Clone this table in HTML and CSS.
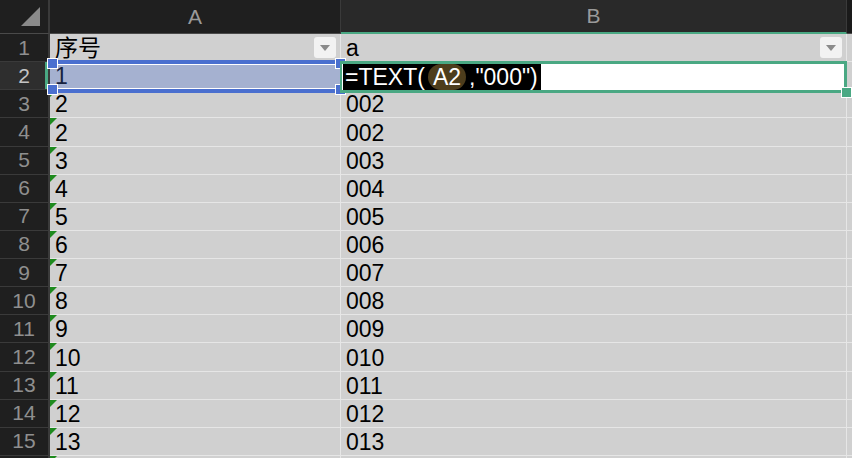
FILE: index.html
```html
<!DOCTYPE html>
<html lang="zh">
<head>
  <meta charset="UTF-8">
  <title>Sheet</title>
  <link rel="stylesheet" href="styles.css">
</head>
<body>
  <div class="sheet">
    <div class="grid">
      <!-- column headers -->
      <div class="corner">
        <svg width="20" height="20" viewBox="0 0 20 20"><polygon points="19,0 19,19 0,19" fill="#8a8a8a"/></svg>
      </div>
      <div class="colhead">A</div>
      <div class="colhead active">B</div>
      <div class="colhead stub"></div>

      <!-- row 1 -->
      <div class="rowhead">1</div>
      <div class="cell">序号<span class="filter"></span></div>
      <div class="cell">a<span class="filter"></span></div>
      <div class="cell stub"></div>

      <!-- row 2 -->
      <div class="rowhead active">2</div>
      <div class="cell picked">1</div>
      <div class="cell"></div>
      <div class="cell stub"></div>

      <div class="rowhead">3</div><div class="cell flag">2</div><div class="cell">002</div><div class="cell stub"></div>
      <div class="rowhead">4</div><div class="cell flag">2</div><div class="cell">002</div><div class="cell stub"></div>
      <div class="rowhead">5</div><div class="cell flag">3</div><div class="cell">003</div><div class="cell stub"></div>
      <div class="rowhead">6</div><div class="cell flag">4</div><div class="cell">004</div><div class="cell stub"></div>
      <div class="rowhead">7</div><div class="cell flag">5</div><div class="cell">005</div><div class="cell stub"></div>
      <div class="rowhead">8</div><div class="cell flag">6</div><div class="cell">006</div><div class="cell stub"></div>
      <div class="rowhead">9</div><div class="cell flag">7</div><div class="cell">007</div><div class="cell stub"></div>
      <div class="rowhead">10</div><div class="cell flag">8</div><div class="cell">008</div><div class="cell stub"></div>
      <div class="rowhead">11</div><div class="cell flag">9</div><div class="cell">009</div><div class="cell stub"></div>
      <div class="rowhead">12</div><div class="cell flag">10</div><div class="cell">010</div><div class="cell stub"></div>
      <div class="rowhead">13</div><div class="cell flag">11</div><div class="cell">011</div><div class="cell stub"></div>
      <div class="rowhead">14</div><div class="cell flag">12</div><div class="cell">012</div><div class="cell stub"></div>
      <div class="rowhead">15</div><div class="cell flag">13</div><div class="cell">013</div><div class="cell stub"></div>
      <div class="rowhead"></div><div class="cell flag"></div><div class="cell"></div><div class="cell stub"></div>
    </div>

    <!-- selection of A2 -->
    <div class="select-a">
      <span class="handle tl"></span>
      <span class="handle tr"></span>
      <span class="handle bl"></span>
      <span class="handle br"></span>
    </div>

    <!-- formula being edited in B2 -->
    <div class="editor">
      <span class="formula">=TEXT(<span class="ref">A2</span>,"000")</span><span class="caret"></span>
      <span class="fill-handle"></span>
    </div>
  </div>
</body>
</html>
```

FILE: styles.css
```css
body {
  margin: 0;
  background-color: #1f1f1f;
  font-family: "Liberation Sans", Arial, "Noto Sans CJK SC", sans-serif;
  overflow: hidden;
}
.sheet {
  position: relative;
  width: 852px;
  height: 458px;
  overflow: hidden;
}
.grid {
  display: grid;
  grid-template-columns: 50px 291px 506px 20px;
  grid-template-rows: 34px repeat(16, 28.14px);
}
.corner {
  background-color: #1f1f1f;
  border-right: 2px solid #3a3a3a;
  border-bottom: 1px solid #4a4a4a;
  display: flex;
  align-items: flex-start;
  justify-content: flex-end;
  padding: 7px 7px 0 0;
}
.colhead {
  background-color: #1f1f1f;
  color: #9a9a9a;
  font-size: 21px;
  display: flex;
  align-items: center;
  justify-content: center;
  border-right: 1px solid #3a3a3a;
  border-bottom: 1px solid #4a4a4a;
}
.colhead.active {
  background-color: #292929;
  border-bottom: 2px solid #4aa883;
}
.colhead.stub {
  background-color: #1a1a1a;
}
.rowhead {
  background-color: #1f1f1f;
  color: #8f8f8f;
  font-size: 21px;
  display: flex;
  align-items: center;
  justify-content: center;
  border-right: 2px solid #3a3a3a;
  border-bottom: 1px solid #3a3a3a;
}
.rowhead.active {
  background-color: #2e2e2e;
  color: #c4c4c4;
  box-shadow: inset -3px 0 0 #4aa883;
}
.cell {
  position: relative;
  background-color: #d0d0d0;
  color: #000;
  font-size: 23px;
  line-height: 1;
  display: flex;
  align-items: flex-end;
  padding: 0 0 1px 5px;
  border-right: 1px solid #e6e6e6;
  border-bottom: 1px solid #e6e6e6;
}
.cell.stub {
  padding: 0;
}
.cell.picked {
  background-color: #a5b1d0;
  color: #17223f;
}
.cell.flag::before {
  content: "";
  position: absolute;
  top: 0;
  left: 0;
  border-top: 7px solid #1e8a1e;
  border-right: 7px solid transparent;
}
.filter {
  position: absolute;
  top: 3px;
  right: 4px;
  width: 22px;
  height: 21px;
  background-color: #f2f2f2;
  border-radius: 3px;
}
.filter::after {
  content: "";
  position: absolute;
  top: 8px;
  left: 6px;
  border-top: 6px solid #8a8a8a;
  border-left: 5px solid transparent;
  border-right: 5px solid transparent;
}
.select-a {
  position: absolute;
  left: 50px;
  top: 60px;
  width: 290px;
  height: 25px;
  border-top: 4px solid #4a6fcf;
  border-bottom: 4px solid #4a6fcf;
  box-shadow: inset 0 1px 0 #fff, inset 0 -1px 0 #fff;
}
.handle {
  position: absolute;
  width: 9px;
  height: 9px;
  background-color: #4a6fcf;
  border: 1px solid #fff;
}
.handle.tl { left: -3px; top: -6px; }
.handle.tr { right: -6px; top: -6px; }
.handle.bl { left: -3px; bottom: -6px; }
.handle.br { right: -6px; bottom: -6px; }
.editor {
  position: absolute;
  left: 340px;
  top: 61px;
  width: 501px;
  height: 26px;
  background-color: #fff;
  border: 3px solid #4aa883;
  border-left-width: 2px;
  display: flex;
  align-items: stretch;
  padding-left: 1px;
}
.formula {
  background-color: #000;
  color: #fff;
  font-size: 23px;
  line-height: 26px;
  padding: 0 2px 0 2px;
  white-space: pre;
}
.ref {
  background-color: #4d3d1c;
  border-radius: 13px;
  padding: 0 5px;
  margin: 0 3px;
}
.caret {
  width: 1px;
  background-color: #000;
}
.fill-handle {
  position: absolute;
  right: -8px;
  bottom: -8px;
  width: 9px;
  height: 9px;
  background-color: #4aa883;
  border: 1px solid #fff;
}
```
